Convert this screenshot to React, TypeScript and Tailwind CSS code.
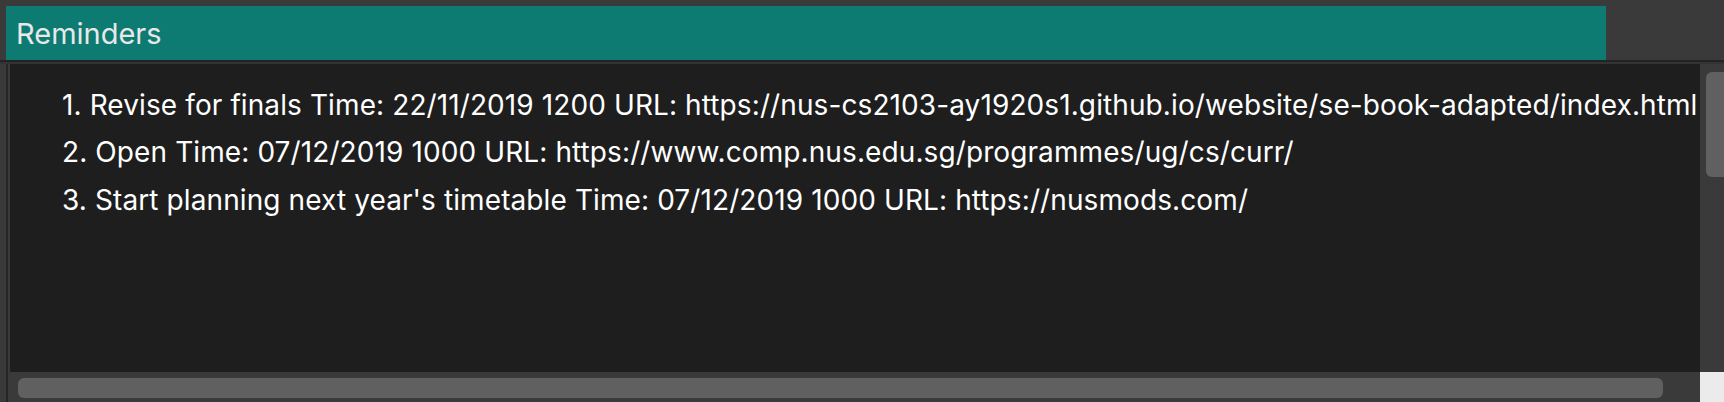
import React from 'react'

const reminders = [
  {
    title: 'Revise for finals',
    time: '22/11/2019 1200',
    url: 'https://nus-cs2103-ay1920s1.github.io/website/se-book-adapted/index.html',
  },
  {
    title: 'Open',
    time: '07/12/2019 1000',
    url: 'https://www.comp.nus.edu.sg/programmes/ug/cs/curr/',
  },
  {
    title: "Start planning next year's timetable",
    time: '07/12/2019 1000',
    url: 'https://nusmods.com/',
  },
]

export default function App() {
  return (
    <div
      className="w-[1724px] h-[402px] bg-[#3a3a3a] flex flex-col overflow-hidden"
      style={{ fontFamily: 'Inter, "Noto Sans", sans-serif' }}
    >
      {/* Header */}
      <div className="pt-[6px] pl-[6px]">
        <div className="w-[1600px] h-[54px] bg-[#0d7b72] flex items-center pl-[10px]">
          <span className="text-[29px] text-[#e8e8e8] leading-none">Reminders</span>
        </div>
      </div>
      <div className="h-[2px] bg-[#232323]" />
      <div className="h-[2px] bg-[#333333]" />

      {/* Scroll pane */}
      <div className="flex-1 flex">
        <div className="w-[6px]" />
        <div className="w-[2px] bg-[#262626]" />
        <div className="flex-1 grid grid-cols-[1fr_24px] grid-rows-[1fr_30px]">
          <div className="bg-[#1e1e1e] ml-[2px] overflow-hidden">
            <ol className="pt-[17px] pl-[52px] flex flex-col whitespace-nowrap">
              {reminders.map((r, i) => (
                <li key={i} className="h-[47.5px] flex items-center text-[28px] tracking-[0.1px] text-white">
                  {i + 1}. {r.title} Time: {r.time} URL: {r.url}
                </li>
              ))}
            </ol>
          </div>
          <div className="bg-[#3a3a3a] pt-[8px] pl-[6px]">
            <div className="h-[105px] bg-[#606060] rounded-l-[6px]" />
          </div>
          <div className="bg-[#3a3a3a] pt-[6px] pl-[10px] pr-[37px]">
            <div className="h-[20px] bg-[#606060] rounded-[6px]" />
          </div>
          <div className="bg-[#ebebeb]" />
        </div>
      </div>
    </div>
  )
}
